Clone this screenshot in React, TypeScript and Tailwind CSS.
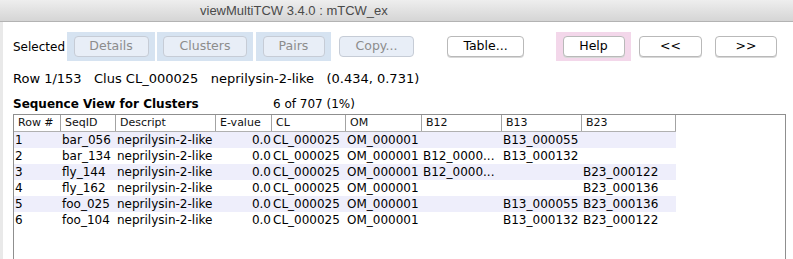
const cols = ['Row #', 'SeqID', 'Descript', 'E-value', 'CL', 'OM', 'B12', 'B13', 'B23']

const rows = [
  ['1', 'bar_056', 'neprilysin-2-like', '0.0', 'CL_000025', 'OM_000001', '', 'B13_000055', ''],
  ['2', 'bar_134', 'neprilysin-2-like', '0.0', 'CL_000025', 'OM_000001', 'B12_0000...', 'B13_000132', ''],
  ['3', 'fly_144', 'neprilysin-2-like', '0.0', 'CL_000025', 'OM_000001', 'B12_0000...', '', 'B23_000122'],
  ['4', 'fly_162', 'neprilysin-2-like', '0.0', 'CL_000025', 'OM_000001', '', '', 'B23_000136'],
  ['5', 'foo_025', 'neprilysin-2-like', '0.0', 'CL_000025', 'OM_000001', '', 'B13_000055', 'B23_000136'],
  ['6', 'foo_104', 'neprilysin-2-like', '0.0', 'CL_000025', 'OM_000001', '', 'B13_000132', 'B23_000122'],
]

const grid = 'grid grid-cols-[47px_55px_100px_56px_74px_76px_80px_80px_94px] w-[662px]'

function Btn({ label, w, disabled }: { label: string; w: string; disabled?: boolean }) {
  return (
    <div
      className={`${w} flex h-[21px] items-center justify-center rounded-[4px] border text-[12.5px] ${
        disabled
          ? 'border-[#c6ccd6] bg-[#e8eef7] text-[#8c8c8c]'
          : 'border-[#b9b9b9] bg-white text-black shadow-[0_1px_0_#d8d8d8]'
      }`}
    >
      {label}
    </div>
  )
}

function Panel({ color, w, children }: { color: string; w: string; children: React.ReactNode }) {
  return <div className={`${color} ${w} flex h-[29px] items-center justify-center`}>{children}</div>
}

export default function App() {
  return (
    <div className="flex h-[259px] w-[793px] flex-col overflow-hidden bg-white font-['DejaVu_Sans',sans-serif] text-black">
      <div className="flex h-[22px] shrink-0 items-center border-b border-[#b3b3b3] bg-gradient-to-b from-[#eeeeee] to-[#d5d5d5] pl-[200px] font-['Liberation_Sans',sans-serif] text-[13px] text-[#4a4a4a]">
        viewMultiTCW 3.4.0 : mTCW_ex
      </div>
      <div className="flex grow border-l-[3px] border-[#e9e9e9]">
        <div className="flex grow flex-col pl-[10px]">
          <div className="mt-[10px] flex items-center">
            <span className="w-[54px] text-[12px]">Selected</span>
            <Panel color="bg-[#d6e3f1]" w="w-[88px]">
              <Btn label="Details" w="w-[75px]" disabled />
            </Panel>
            <div className="ml-[2px]">
              <Panel color="bg-[#d6e3f1]" w="w-[96px]">
                <Btn label="Clusters" w="w-[84px]" disabled />
              </Panel>
            </div>
            <div className="ml-[3px]">
              <Panel color="bg-[#d6e3f1]" w="w-[75px]">
                <Btn label="Pairs" w="w-[62px]" disabled />
              </Panel>
            </div>
            <div className="ml-[8px]">
              <Btn label="Copy..." w="w-[75px]" disabled />
            </div>
            <div className="ml-[33px]">
              <Btn label="Table..." w="w-[77px]" />
            </div>
            <div className="ml-[32px]">
              <Panel color="bg-[#f3d7ea]" w="w-[75px]">
                <Btn label="Help" w="w-[62px]" />
              </Panel>
            </div>
            <div className="ml-[8px]">
              <Btn label="<<" w="w-[63px]" />
            </div>
            <div className="ml-[13px]">
              <Btn label=">>" w="w-[62px]" />
            </div>
          </div>

          <div className="mt-[9px] whitespace-pre text-[13px] leading-[18px]">
            Row 1/153   Clus CL_000025   neprilysin-2-like   (0.434, 0.731)
          </div>

          <div className="mt-[8px] flex text-[12px] leading-[16px]">
            <span className="w-[260px] font-bold">Sequence View for Clusters</span>
            <span>6 of 707 (1%)</span>
          </div>

          <div className="mt-[2px] mr-[7px] grow border border-b-0 border-[#8f8f8f]">
            <div className={`${grid} h-[17px] border-b border-[#b0b0b0] text-[11px] leading-[16px] text-[#111]`}>
              {cols.map((c) => (
                <div key={c} className="overflow-hidden whitespace-nowrap border-r border-[#a3a3a3] pl-[4px]">
                  {c}
                </div>
              ))}
            </div>
            {rows.map((r, i) => (
              <div key={r[0]} className={`${grid} h-[16px] text-[12px] leading-[16px] ${i % 2 === 0 ? 'bg-[#eeeefb]' : ''}`}>
                {r.map((v, j) => (
                  <div
                    key={j}
                    className={`overflow-hidden whitespace-nowrap ${j === 3 ? 'pr-[1px] text-right' : 'pl-[1px]'}`}
                  >
                    {v}
                  </div>
                ))}
              </div>
            ))}
          </div>
        </div>
      </div>
    </div>
  )
}
